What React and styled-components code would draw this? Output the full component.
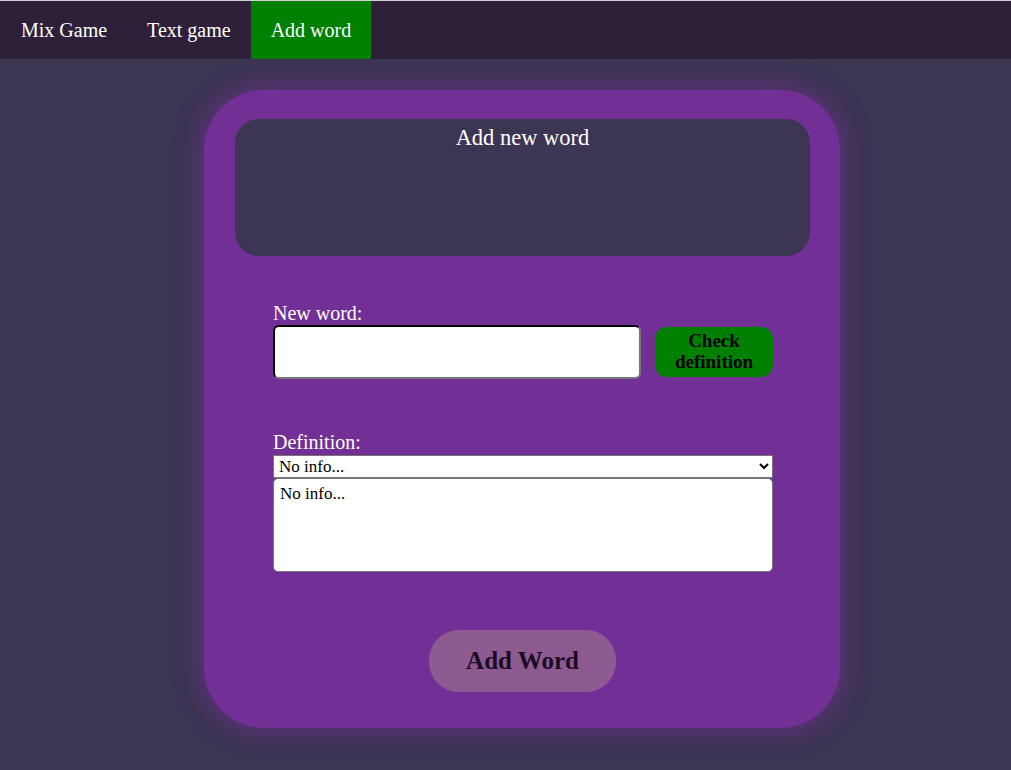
import React from 'react';
import styled, { createGlobalStyle } from 'styled-components';

const GlobalStyle = createGlobalStyle`
  html, body {
    margin: 0;
    background-color: #3c3553;
    font-family: "Liberation Serif", "Times New Roman", serif;
  }
`;

const Nav = styled.nav`
  display: flex;
  height: 58px;
  background-color: #2f2039;
  border-top: 1px solid #cfcfd6;
`;

const NavItem = styled.a`
  display: flex;
  align-items: center;
  padding: 0 20px;
  margin-left: ${(p) => (p.$first ? '1px' : '0')};
  color: #fff;
  font-size: 20px;
  text-decoration: none;
  background-color: ${(p) => (p.$active ? '#008000' : 'transparent')};
`;

const Main = styled.main`
  padding: 31px 0 40px 204px;
`;

const Card = styled.div`
  width: 636px;
  height: 638px;
  box-sizing: border-box;
  padding: 29px 30px 0 31px;
  border-radius: 60px;
  background-color: #722f96;
  box-shadow: 0 0 22px 6px rgba(114, 47, 150, 0.55);
  display: flex;
  flex-direction: column;
`;

const Header = styled.div`
  height: 137px;
  border-radius: 24px;
  background-color: #3c3553;
  color: #fff;
  text-align: center;
  font-size: 22.5px;
  padding-top: 6px;
  box-sizing: border-box;
`;

const Form = styled.div`
  width: 500px;
  margin: 46px 0 0 38px;
  display: flex;
  flex-direction: column;
`;

const Label = styled.label`
  color: #fff;
  font-size: 20px;
  line-height: 23px;
`;

const Row = styled.div`
  display: flex;
  align-items: center;
  gap: 14px;
`;

const WordInput = styled.input`
  width: 368px;
  height: 54px;
  box-sizing: border-box;
  border-radius: 6px;
  border: 2px inset #767676;
  border-top-color: #2a1a30;
  border-left-color: #2a1a30;
  background: #fff;
  font-size: 18px;
  font-family: inherit;
`;

const CheckButton = styled.button`
  width: 118px;
  height: 50px;
  border: none;
  border-radius: 12px;
  background-color: #008000;
  color: #000;
  font-family: inherit;
  font-weight: bold;
  font-size: 19px;
  line-height: 21px;
  padding: 0 0 2px;
`;

const DefinitionBlock = styled.div`
  margin-top: 52px;
  display: flex;
  flex-direction: column;
`;

const Select = styled.select`
  width: 500px;
  height: 23px;
  margin-top: 1px;
  box-sizing: border-box;
  border: 1px solid #767676;
  border-radius: 0;
  background: #fff;
  font-family: inherit;
  font-size: 17px;
  padding: 0 1px;
  color: #000;
`;

const TextArea = styled.textarea`
  width: 500px;
  height: 94px;
  box-sizing: border-box;
  border: 1px solid #767676;
  border-radius: 5px;
  font-family: inherit;
  font-size: 17px;
  padding: 5px 6px;
  resize: none;
  color: #000;
`;

const AddButton = styled.button`
  align-self: center;
  margin: 58px 0 0 0;
  width: 187px;
  height: 62px;
  border: none;
  border-radius: 30px;
  background-color: #8d5a92;
  color: #1c0c22;
  font-family: inherit;
  font-weight: bold;
  font-size: 25px;
  padding: 0;
`;

export default function App() {
  return (
    <>
      <GlobalStyle />
      <Nav>
        <NavItem $first>Mix Game</NavItem>
        <NavItem>Text game</NavItem>
        <NavItem $active>Add word</NavItem>
      </Nav>
      <Main>
        <Card>
          <Header>Add new word</Header>
          <Form>
            <Label>New word:</Label>
            <Row>
              <WordInput type="text" />
              <CheckButton>Check<br />definition</CheckButton>
            </Row>
            <DefinitionBlock>
              <Label>Definition:</Label>
              <Select defaultValue="none">
                <option value="none">No info...</option>
              </Select>
              <TextArea defaultValue="No info..." />
            </DefinitionBlock>
          </Form>
          <AddButton>Add Word</AddButton>
        </Card>
      </Main>
    </>
  );
}
